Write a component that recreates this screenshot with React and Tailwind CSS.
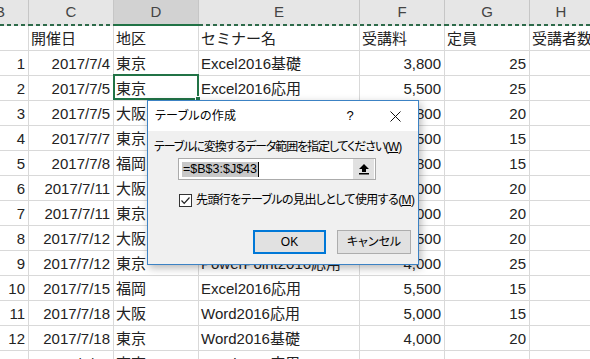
import React from "react";

const cols = ["B", "C", "D", "E", "F", "G", "H"];

const rows = [
  ["", "開催日", "地区", "セミナー名", "受講料", "定員", "受講者数"],
  ["1", "2017/7/4", "東京", "Excel2016基礎", "3,800", "25", ""],
  ["2", "2017/7/5", "東京", "Excel2016応用", "5,500", "25", ""],
  ["3", "2017/7/5", "大阪", "Excel2016基礎", "3,800", "20", ""],
  ["4", "2017/7/7", "東京", "Excel2016応用", "5,500", "15", ""],
  ["5", "2017/7/8", "福岡", "Excel2016基礎", "3,800", "15", ""],
  ["6", "2017/7/11", "大阪", "Word2016基礎", "4,000", "20", ""],
  ["7", "2017/7/11", "東京", "Word2016応用", "4,000", "20", ""],
  ["8", "2017/7/12", "大阪", "PowerPoint2016基礎", "5,500", "20", ""],
  ["9", "2017/7/12", "東京", "PowerPoint2016応用", "4,000", "25", ""],
  ["10", "2017/7/15", "福岡", "Excel2016応用", "5,500", "15", ""],
  ["11", "2017/7/18", "大阪", "Word2016応用", "5,000", "15", ""],
  ["12", "2017/7/18", "東京", "Word2016基礎", "4,000", "20", ""],
  ["13", "2017/7/19", "東京", "Word2016応用", "5,000", "20", ""],
];

const rightAligned = [true, true, false, false, true, true, false];

const Cell = ({ value, right, selected, isHead }) => (
  <div
    className={`relative h-[25px] border-r border-b border-[#d9d9d9] flex items-center whitespace-nowrap ${
      right && !isHead ? "justify-end pr-[3px]" : "pl-[2px]"
    }`}
  >
    <span className="leading-none">{value}</span>
    {selected && (
      <div className="absolute -left-[1px] -top-[2px] -right-[1px] bottom-0 z-10 border-2 border-[#217346]">
        <div className="absolute -right-[4px] -bottom-[4px] w-[6px] h-[6px] bg-[#217346] border border-white" />
      </div>
    )}
  </div>
);

const Sheet = () => (
  <div className="text-[15px] text-[#222] font-['Liberation_Sans','Noto_Sans_CJK_JP',sans-serif]">
    <div className="grid grid-cols-[29px_85px_85px_161px_85px_85px_1fr]">
      {cols.map((c) => (
        <div
          key={c}
          className={`h-[24px] border-r border-[#c6c6c6] flex items-center justify-center text-[#444] ${
            c === "D" ? "bg-[#d2d2d2] text-[#222]" : "bg-[#e6e6e6]"
          } ${c === "B" ? "justify-start -ml-[5px]" : ""}`}
        >
          {c}
        </div>
      ))}
      {cols.map((c) => (
        <div
          key={c + "-line"}
          className={`h-[2px] ${
            c === "D"
              ? "bg-[#217346]"
              : "bg-[repeating-linear-gradient(90deg,#2e6b4a_0_4px,#e6e6e6_4px_7px)]"
          }`}
        />
      ))}
      {rows.map((row, r) =>
        row.map((v, i) => (
          <Cell
            key={r + "-" + i}
            value={v}
            right={rightAligned[i]}
            isHead={r === 0}
            selected={r === 2 && i === 2}
          />
        ))
      )}
    </div>
  </div>
);

const Dialog = () => (
  <div className="absolute left-[147px] top-[100px] z-20 w-[272px] h-[165px] border border-[#3c82c4] bg-[#f0f0f0] shadow-[2px_3px_8px_rgba(0,0,0,0.28)] text-[12px] text-black font-['Liberation_Sans','Noto_Sans_CJK_JP',sans-serif] [font-feature-settings:'palt']">
    <div className="h-[30px] bg-white flex items-center">
      <span className="pl-[7px] tracking-[0.3px]">テーブルの作成</span>
      <div className="flex-1" />
      <span className="w-[30px] text-center mr-[7px] text-[13px]">?</span>
      <span className="w-[46px] h-full flex items-center justify-center">
        <svg width="11" height="11" viewBox="0 0 11 11">
          <path d="M0.5 0.5 L10.5 10.5 M10.5 0.5 L0.5 10.5" stroke="#111" strokeWidth="1" />
        </svg>
      </span>
    </div>
    <div className="px-[6px] pt-[8px]">
      <div className="leading-[16px] whitespace-nowrap tracking-[-1.1px]">
        テーブルに変換するデータ範囲を指定してください(<span className="underline">W</span>)
      </div>
      <div className="mt-[3px] ml-[24px] w-[198px] h-[22px] border border-[#ababab] bg-white flex items-center">
        <span className="ml-[3px] bg-[#c8c8c8] text-[12.5px] leading-[15px] px-[1px]">=$B$3:$J$43</span>
        <span className="w-[1px] h-[15px] bg-black" />
        <div className="flex-1" />
        <div className="w-[21px] h-[20px] mr-[1px] bg-[#e1e1e1] flex items-center justify-center">
          <svg width="10" height="11" viewBox="0 0 10 11">
            <polygon points="5,0 10,5 7,5 7,8 3,8 3,5 0,5" fill="#000" />
            <rect x="0" y="9" width="10" height="1.5" fill="#000" />
          </svg>
        </div>
      </div>
      <div className="mt-[13px] ml-[25px] flex items-center gap-[4px] h-[14px]">
        <div className="w-[13px] h-[13px] border border-[#333] bg-white flex items-center justify-center">
          <svg width="11" height="11" viewBox="0 0 11 11">
            <polyline points="1.5,5.5 4.2,8.3 9.5,2.5" fill="none" stroke="#222" strokeWidth="1.2" />
          </svg>
        </div>
        <span className="leading-[16px] whitespace-nowrap tracking-[-0.6px]">
          先頭行をテーブルの見出しとして使用する(<span className="underline">M</span>)
        </span>
      </div>
      <div className="mt-[23px] flex justify-end gap-[11px] pr-[1px]">
        <button className="w-[73px] h-[24px] border-2 border-[#0078d7] bg-[#e1e1e1] text-[12px]">
          OK
        </button>
        <button className="w-[74px] h-[24px] border border-[#adadad] bg-[#e1e1e1] text-[12px]">
          キャンセル
        </button>
      </div>
    </div>
  </div>
);

export default function App() {
  return (
    <div className="relative w-[590px] h-[359px] overflow-hidden bg-white">
      <Sheet />
      <Dialog />
    </div>
  );
}
